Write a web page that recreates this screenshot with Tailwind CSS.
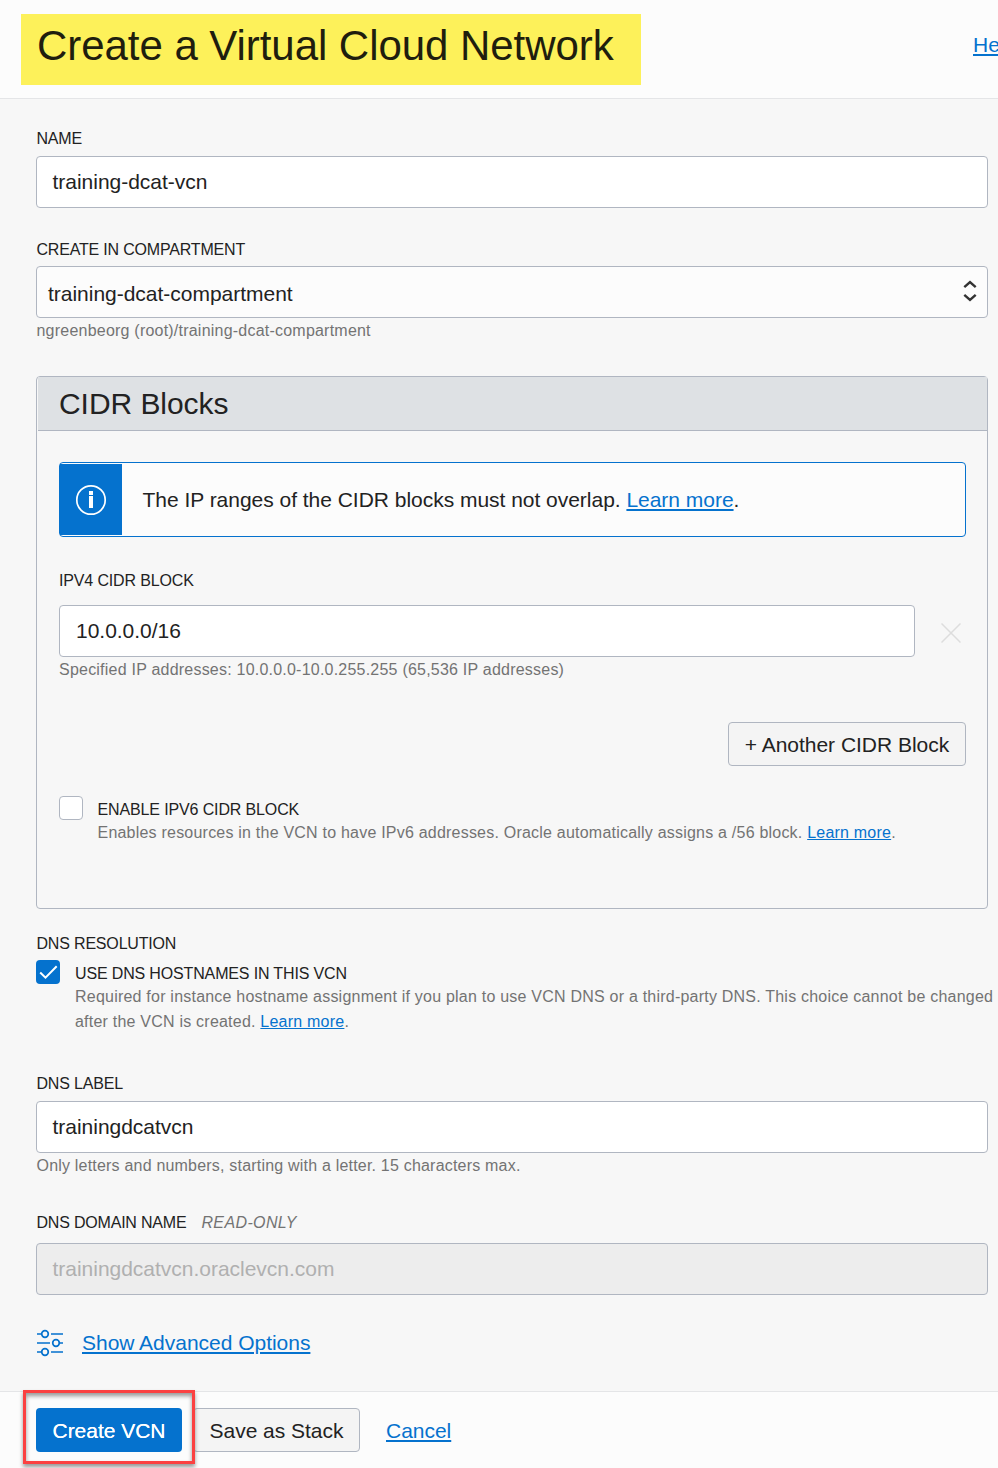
<!DOCTYPE html>
<html lang="en">
<head>
<meta charset="utf-8">
<title>Create a Virtual Cloud Network</title>
<script src="https://cdn.jsdelivr.net/npm/@tailwindcss/browser@4"></script>
</head>
<body class="w-[998px] h-[1468px] overflow-hidden bg-[#f7f7f7] font-['Liberation_Sans',Arial,sans-serif] text-[21px] tracking-[-0.02px] text-[#222]">
<header class="flex h-[99px] items-start justify-between border-b border-[#e4e5e7] bg-[#fcfcfc]">
  <h1 class="mt-[14px] ml-[21px] h-[71px] w-[620px] whitespace-nowrap bg-[#fdf15a] pl-[16px] text-[42px] leading-[64px] tracking-[-0.05px] text-[#1f1e0e]">Create a Virtual Cloud Network</h1>
  <a class="mt-[30px] w-[25px] overflow-hidden whitespace-nowrap leading-[30px] text-[#0572ce] underline decoration-2 underline-offset-2">Help</a>
</header>
<main class="h-[1292px] pl-[36px] pr-[10px] pt-[29px]">
  <label class="block h-[28px] pt-px pl-[0.5px] text-[16px] leading-5 tracking-[-0.18px]">NAME</label>
  <div class="flex h-[52px] items-center rounded border border-[#b0b6c1] bg-white pl-[15.5px]">training-dcat-vcn</div>
  <label class="mt-[31px] block h-[27px] pt-px pl-[0.5px] text-[16px] leading-5 tracking-[-0.19px]">CREATE IN COMPARTMENT</label>
  <div class="flex h-[52px] items-center justify-between rounded border border-[#b0b6c1] bg-[#fcfcfc] pl-[11px] pr-[10px]"><span class="pt-[3px]">training-dcat-compartment</span>
    <svg class="mb-[3px] h-[22px] w-[14px]" viewBox="0 0 14 22" fill="none" stroke="#333" stroke-width="2.4"><path d="M1.3 7.2 7 2l5.700 5.200M1.300 14.800 7 20l5.700-5.200"/></svg>
  </div>
  <p class="mt-[3px] h-5 pl-[0.5px] text-[16px] leading-5 tracking-[0.22px] text-[#737373]">ngreenbeorg (root)/training-dcat-compartment</p>
  <section class="mt-[35px] h-[533px] rounded border border-[#b0b6c1]">
    <h2 class="ml-px h-[54px] border-b border-[#b0b6c1] bg-[#dee1e4] pl-[21px] text-[30px] leading-[53px] tracking-[-0.05px]">CIDR Blocks</h2>
    <div class="pl-[22px] pr-[21px] pt-[31px]">
      <div class="flex h-[75px] items-center rounded border border-[#0572ce] bg-[#fcfcfc]">
        <div class="flex h-[71px] w-[62px] items-center justify-center bg-[#0572ce]">
          <svg class="h-8 w-8" viewBox="0 0 32 32" fill="none"><circle cx="16" cy="16" r="14.200" stroke="#fff" stroke-width="1.700"/><path d="M14 7h4v4h-4zM14 12h4v12h-4z" fill="#fff"/></svg>
        </div>
        <p class="pl-[20.5px] tracking-[-0.025px]">The IP ranges of the CIDR blocks must not overlap. <a class="text-[#0572ce] underline decoration-2 underline-offset-2">Learn more</a>.</p>
      </div>
      <label class="mt-[33px] block h-[35px] pt-px text-[16px] leading-5 tracking-[-0.15px]">IPV4 CIDR BLOCK</label>
      <div class="flex h-[52px] items-center">
        <div class="flex h-[52px] w-[856px] items-center rounded border border-[#b0b6c1] bg-white pl-[16px]">10.0.0.0/16</div>
        <svg class="mt-1 ml-[26px] h-5 w-5" viewBox="0 0 20 20" stroke="#ddd" stroke-width="1.500"><path d="m.5.5 19 19m0-19-19 19"/></svg>
      </div>
      <p class="mt-[3px] h-5 text-[16px] leading-5 tracking-[0.22px] text-[#737373]">Specified IP addresses: 10.0.0.0-10.0.255.255 (65,536 IP addresses)</p>
      <div class="mt-[42px] flex justify-end"><button class="h-[44px] w-[238px] rounded border border-[#b0b6c1] bg-[#f4f4f4] pt-px">+ Another CIDR Block</button></div>
      <div class="mt-[30px] flex">
        <span class="h-6 w-6 rounded border border-[#b0b6c1] bg-white"></span>
        <div class="ml-[14.5px] text-[16px] leading-5">
          <p class="mt-[4px] tracking-[-0.13px]">ENABLE IPV6 CIDR BLOCK</p>
          <p class="mt-[3px] tracking-[0.215px] text-[#737373]">Enables resources in the VCN to have IPv6 addresses. Oracle automatically assigns a /56 block. <a class="text-[#0572ce] underline underline-offset-1">Learn more</a>.</p>
        </div>
      </div>
    </div>
  </section>
  <label class="mt-[24px] block h-[27px] pt-px pl-[0.5px] text-[16px] leading-5 tracking-[-0.18px]">DNS RESOLUTION</label>
  <div class="-mr-[10px] flex h-[113px]">
    <span class="flex h-6 w-6 shrink-0 items-center justify-center rounded bg-[#0572ce]"><svg class="h-6 w-6" viewBox="0 0 24 24" fill="none" stroke="#fff" stroke-width="2"><path d="m4.200 12.500 5.300 5.200L20.700 6.300"/></svg></span>
    <div class="ml-[15px] text-[16px]">
      <p class="mt-[4px] leading-5 tracking-[-0.15px]">USE DNS HOSTNAMES IN THIS VCN</p>
      <p class="whitespace-nowrap leading-[25px] tracking-[0.22px] text-[#737373]">Required for instance hostname assignment if you plan to use VCN DNS or a third-party DNS. This choice cannot be changed<br>after the VCN is created. <a class="text-[#0572ce] underline underline-offset-1">Learn more</a>.</p>
    </div>
  </div>
  <label class="block h-[28px] pt-px pl-[0.5px] text-[16px] leading-5 tracking-[-0.18px]">DNS LABEL</label>
  <div class="flex h-[52px] items-center rounded border border-[#b0b6c1] bg-white pl-[15.5px]">trainingdcatvcn</div>
  <p class="mt-[3px] h-5 pl-[0.5px] text-[16px] leading-5 tracking-[0.2px] text-[#737373]">Only letters and numbers, starting with a letter. 15 characters max.</p>
  <label class="mt-[36px] flex h-[31px] gap-[15px] pt-px pl-[0.5px] text-[16px] leading-5 tracking-[-0.2px]">DNS DOMAIN NAME<i class="tracking-[0.38px] text-[#737373]">READ-ONLY</i></label>
  <div class="flex h-[52px] items-center rounded border border-[#b0b6c1] bg-[#ededed] pl-[15.5px] text-[#b0b0b0]">trainingdcatvcn.oraclevcn.com</div>
  <div class="mt-[33px] flex h-[30px] items-center">
    <svg class="ml-px h-[28px] w-[26px]" viewBox="0 0 26 28" fill="none" stroke="#0572ce" stroke-width="1.700"><path d="M0 5h4.500M14 5h12M0 14h13M23 14h3M0 23h4.500M14 23h12"/><circle cx="8" cy="5" r="3.300"/><circle cx="19" cy="14" r="3.300"/><circle cx="8" cy="23" r="3.300"/></svg>
    <a class="ml-[19px] leading-[30px] text-[#0572ce] underline decoration-2 underline-offset-2">Show Advanced Options</a>
  </div>
</main>
<footer class="relative flex h-[77px] items-start border-t border-[#e4e5e7] bg-[#fcfcfc] pt-[16px] pl-[36px]">
  <button class="h-[44px] w-[146px] rounded bg-[#0572ce] pt-px text-white [text-shadow:0_0_0.5px_#fff]">Create VCN</button>
  <button class="ml-[11px] h-[44px] w-[167px] rounded border border-[#b0b6c1] bg-[#f4f4f4] pt-px">Save as Stack</button>
  <a class="ml-[26px] leading-[45px] text-[#0572ce] underline decoration-2 underline-offset-2">Cancel</a>
  <div class="pointer-events-none absolute top-[-2px] left-[23px] h-[74px] w-[172px] border-3 border-[#fb4141] shadow-[0_3px_4px_rgba(0,0,0,0.4),inset_0_3px_4px_rgba(0,0,0,0.4)]"></div>
</footer>
</body>
</html>
